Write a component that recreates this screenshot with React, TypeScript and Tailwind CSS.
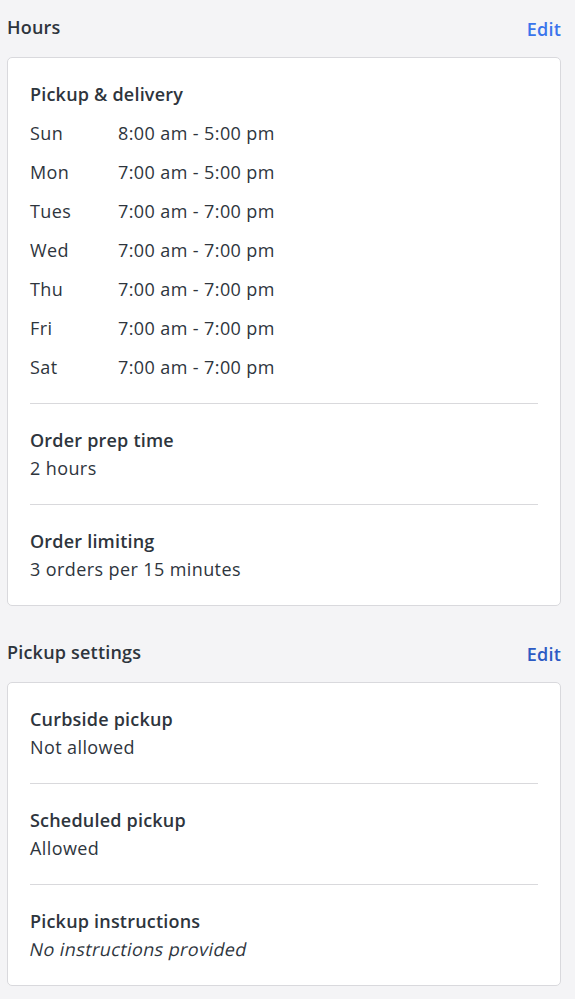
const hours = [
  ['Sun', '8:00 am - 5:00 pm'],
  ['Mon', '7:00 am - 5:00 pm'],
  ['Tues', '7:00 am - 7:00 pm'],
  ['Wed', '7:00 am - 7:00 pm'],
  ['Thu', '7:00 am - 7:00 pm'],
  ['Fri', '7:00 am - 7:00 pm'],
  ['Sat', '7:00 am - 7:00 pm'],
];

function SectionHeader({ title, editClass }: { title: string; editClass: string }) {
  return (
    <div className="flex items-center justify-between h-7">
      <h2 className="text-[18px] leading-7 font-semibold tracking-[0.2px] text-[#2e353d]">{title}</h2>
      <button className={`text-[18px] leading-7 font-semibold tracking-[0.2px] pt-1 ${editClass}`}>Edit</button>
    </div>
  );
}

function Field({ label, value, italic }: { label: string; value: string; italic?: boolean }) {
  return (
    <div className="py-[22px]">
      <div className="text-[18px] leading-7 font-semibold tracking-[0.2px] text-[#2e353d]">{label}</div>
      <div className="text-[18px] leading-7 tracking-[0.4px] text-[#2e353d]">
        {italic ? <span className="inline-block -skew-x-12">{value}</span> : value}
      </div>
    </div>
  );
}

export default function App() {
  return (
    <div
      className="min-h-[999px] bg-[#f4f4f6] pl-[7px] pr-[14px] pt-[13px] pb-[14px]"
      style={{ fontFamily: '"Open Sans", "Noto Sans", sans-serif' }}
    >
      {/* Hours */}
      <SectionHeader title="Hours" editClass="text-[#3a74ec]" />
      <div className="mt-4 bg-white border border-[#d9d9dd] rounded-[5px] px-[22px]">
        <div className="py-[22px] flex flex-col gap-[11px]">
          <div className="text-[18px] leading-7 font-semibold tracking-[0.2px] text-[#2e353d]">Pickup &amp; delivery</div>
          {hours.map(([day, time]) => (
            <div key={day} className="flex text-[18px] leading-7 tracking-[0.4px] text-[#2e353d]">
              <span className="w-[88px]">{day}</span>
              <span>{time}</span>
            </div>
          ))}
        </div>
        <div className="border-t border-[#d9d9dc]" />
        <Field label="Order prep time" value="2 hours" />
        <div className="border-t border-[#d9d9dc]" />
        <Field label="Order limiting" value="3 orders per 15 minutes" />
      </div>

      {/* Pickup settings */}
      <div className="mt-8">
        <SectionHeader title="Pickup settings" editClass="text-[#2c5bc4]" />
      </div>
      <div className="mt-4 bg-white border border-[#d9d9dd] rounded-[5px] px-[22px]">
        <Field label="Curbside pickup" value="Not allowed" />
        <div className="border-t border-[#d9d9dc]" />
        <Field label="Scheduled pickup" value="Allowed" />
        <div className="border-t border-[#d9d9dc]" />
        <Field label="Pickup instructions" value="No instructions provided" italic />
      </div>
    </div>
  );
}
